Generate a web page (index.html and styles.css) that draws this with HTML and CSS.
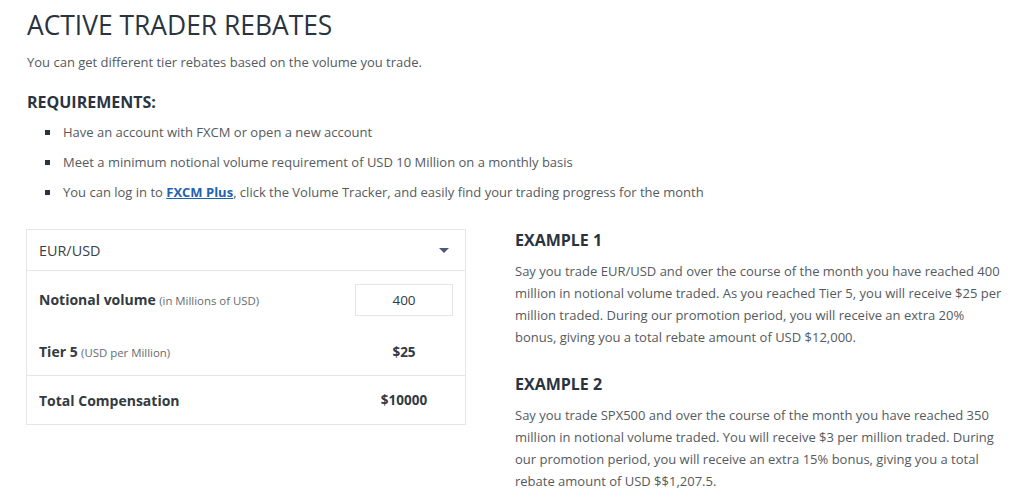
FILE: index.html
```html
<!DOCTYPE html>
<html>
<head>
<meta charset="utf-8">
<link rel="stylesheet" href="styles.css">
</head>
<body>
<div class="page">
  <h1 class="title">ACTIVE TRADER REBATES</h1>
  <p class="intro">You can get different tier rebates based on the volume you trade.</p>
  <h2 class="req-title">REQUIREMENTS:</h2>
  <ul class="req-list">
    <li>Have an account with FXCM or open a new account</li>
    <li>Meet a minimum notional volume requirement of USD 10 Million on a monthly basis</li>
    <li>You can log in to <a href="#" class="link">FXCM Plus</a>, click the Volume Tracker, and easily find your trading progress for the month</li>
  </ul>
  <div class="columns">
    <div class="calc">
      <div class="calc-select">
        <span>EUR/USD</span>
        <span class="arrow"></span>
      </div>
      <div class="calc-row row-volume">
        <span class="label"><b>Notional volume</b> <small>(in Millions of USD)</small></span>
        <span class="input">400</span>
      </div>
      <div class="calc-row row-tier">
        <span class="label"><b>Tier 5</b> <small>(USD per Million)</small></span>
        <span class="value">$25</span>
      </div>
      <div class="calc-row row-total">
        <span class="label"><b>Total Compensation</b></span>
        <span class="value">$10000</span>
      </div>
    </div>
    <div class="examples">
      <h3 class="ex-title">EXAMPLE 1</h3>
      <p class="ex-text">Say you trade EUR/USD and over the course of the month you have reached 400 million in notional volume traded. As you reached Tier 5, you will receive $25 per million traded. During our promotion period, you will receive an extra 20% bonus, giving you a total rebate amount of USD $12,000.</p>
      <h3 class="ex-title ex2">EXAMPLE 2</h3>
      <p class="ex-text">Say you trade SPX500 and over the course of the month you have reached 350 million in notional volume traded. You will receive $3 per million traded. During our promotion period, you will receive an extra 15% bonus, giving you a total rebate amount of USD $$1,207.5.</p>
    </div>
  </div>
</div>
</body>
</html>
```
FILE: styles.css
```css
html, body {
  margin: 0;
  padding: 0;
  background: #ffffff;
}
body {
  font-family: "Open Sans", "Liberation Sans", sans-serif;
  color: #555a60;
  font-size: 13px;
}
.page {
  padding: 9px 0 0 27px;
}
.title {
  margin: 0;
  font-size: 26.4px;
  line-height: 32px;
  font-weight: 400;
  color: #2a3441;
}
.intro {
  margin: 12px 0 0;
  line-height: 18px;
}
.req-title {
  margin: 20px 0 0;
  font-size: 16px;
  line-height: 22px;
  font-weight: 700;
  color: #2a3441;
}
.req-list {
  list-style: none;
  margin: 9px 0 0;
  padding: 0 0 0 36px;
}
.req-list li {
  position: relative;
  line-height: 20px;
  margin-bottom: 10px;
}
.req-list li::before {
  content: "";
  position: absolute;
  left: -18px;
  top: 8px;
  width: 5px;
  height: 5px;
  background: #2a3441;
}
.link {
  color: #1f62b0;
  font-weight: 700;
  text-decoration: underline;
}
.columns {
  display: flex;
  align-items: flex-start;
  margin-top: 27px;
}
.calc {
  width: 438px;
  margin-left: -1px;
  border: 1px solid #e3e6ea;
  flex: none;
}
.calc-select {
  height: 40px;
  display: flex;
  align-items: center;
  justify-content: space-between;
  padding: 0 16px 0 12px;
  font-size: 14.4px;
  color: #3a4048;
  border-bottom: 1px solid #e3e6ea;
}
.arrow {
  width: 0;
  height: 0;
  border-left: 5px solid transparent;
  border-right: 5px solid transparent;
  border-top: 5px solid #4b5878;
}
.calc-row {
  display: flex;
  align-items: center;
  justify-content: space-between;
  padding: 0 12px;
}
.label b {
  font-weight: 700;
  font-size: 14px;
  color: #333a42;
}
.label small {
  font-size: 11.4px;
  color: #666b72;
}
.row-volume {
  height: 57px;
}
.row-tier {
  height: 47px;
  border-bottom: 1px solid #e3e6ea;
}
.row-total {
  height: 48px;
}
.input {
  width: 96px;
  height: 30px;
  border: 1px solid #e3e6ea;
  display: flex;
  align-items: center;
  justify-content: center;
  font-size: 13.5px;
  color: #333a42;
}
.value {
  width: 98px;
  text-align: center;
  font-weight: 700;
  font-size: 13.5px;
  color: #333a42;
}
.examples {
  margin-left: 49px;
  width: 488px;
}
.ex-title {
  margin: 0;
  font-size: 16px;
  line-height: 22px;
  font-weight: 700;
  color: #2a3441;
}
.ex-text {
  margin: 9px 0 0;
  line-height: 22px;
}
.ex2 {
  margin-top: 25px;
}
```
